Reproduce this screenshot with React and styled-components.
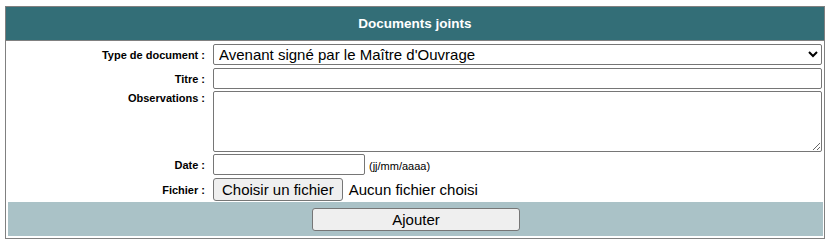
import React from "react";
import styled, { createGlobalStyle } from "styled-components";

const GlobalStyle = createGlobalStyle`
  body {
    margin: 0;
    background: #ffffff;
    font-family: "Liberation Sans", Arial, sans-serif;
  }
`;

const Panel = styled.div`
  box-sizing: border-box;
  width: 820px;
  margin: 6px 0 0 5px;
  border: 1px solid #808080;
  background: #ffffff;
`;

const Header = styled.div`
  height: 33px;
  border-bottom: 1px solid #808080;
  background: #336e77;
  color: #ffffff;
  font-weight: bold;
  font-size: 13.5px;
  display: flex;
  align-items: center;
  justify-content: center;
`;

const Body = styled.div`
  padding: 3px 2px 0 0;
`;

const Row = styled.div`
  display: grid;
  grid-template-columns: 199px 609px;
  column-gap: 8px;
  margin-top: ${(p) => p.$mt || 0}px;
  height: ${(p) => p.$h}px;
`;

const Label = styled.div`
  font-size: 11px;
  font-weight: bold;
  color: #000;
  text-align: right;
  align-self: ${(p) => (p.$top ? "start" : "center")};
  padding-top: ${(p) => (p.$top ? "1px" : "0")};
  white-space: nowrap;
`;

const fieldBase = `
  box-sizing: border-box;
  border: 1px solid #767676;
  border-radius: 2px;
  background: #ffffff;
  font-family: "Liberation Sans", Arial, sans-serif;
  font-size: 15px;
  color: #000;
  margin: 0;
`;

const Select = styled.select`
  ${fieldBase}
  width: 100%;
  height: 21px;
  padding: 0 0 0 1px;
`;

const TextInput = styled.input`
  ${fieldBase}
  width: ${(p) => p.$w || "100%"};
  height: 21px;
  padding: 0 2px;
`;

const TextArea = styled.textarea`
  ${fieldBase}
  width: 100%;
  height: 61px;
  padding: 2px;
  resize: both;
`;

const Inline = styled.div`
  display: flex;
  align-items: baseline;
`;

const Hint = styled.span`
  font-size: 11px;
  color: #000;
  margin-left: 4px;
`;

const NativeButton = styled.button`
  box-sizing: border-box;
  background: #efefef;
  border: 1px solid #767676;
  border-radius: 3px;
  font-family: "Liberation Sans", Arial, sans-serif;
  font-size: 15px;
  color: #000;
  margin: 0;
  height: ${(p) => p.$h || 23}px;
  width: ${(p) => (p.$w ? `${p.$w}px` : "auto")};
  padding: 0 ${(p) => (p.$pad != null ? p.$pad : 6)}px;
  cursor: pointer;
`;

const NoFile = styled.span`
  font-size: 15px;
  color: #000;
  margin-left: 6px;
`;

const Footer = styled.div`
  height: 34px;
  margin: 1px 1px 2px 2px;
  background: #aac2c7;
  display: flex;
  align-items: center;
  justify-content: center;
  padding-left: 1px;
`;

export default function App() {
  return (
    <>
      <GlobalStyle />
      <Panel>
        <Header>Documents joints</Header>
        <Body>
          <Row $h={21}>
            <Label>Type de document :</Label>
            <Select defaultValue="avenant">
              <option value="avenant">Avenant signé par le Maître d'Ouvrage</option>
            </Select>
          </Row>
          <Row $h={21} $mt={3}>
            <Label>Titre :</Label>
            <TextInput type="text" />
          </Row>
          <Row $h={61} $mt={2}>
            <Label $top>Observations :</Label>
            <TextArea />
          </Row>
          <Row $h={21} $mt={2}>
            <Label>Date :</Label>
            <Inline>
              <TextInput type="text" $w="152px" />
              <Hint>(jj/mm/aaaa)</Hint>
            </Inline>
          </Row>
          <Row $h={23} $mt={3}>
            <Label>Fichier :</Label>
            <Inline>
              <NativeButton type="button" $pad={8}>Choisir un fichier</NativeButton>
              <NoFile>Aucun fichier choisi</NoFile>
            </Inline>
          </Row>
        </Body>
        <Footer>
          <NativeButton type="button" $w={208} $h={23}>Ajouter</NativeButton>
        </Footer>
      </Panel>
    </>
  );
}
